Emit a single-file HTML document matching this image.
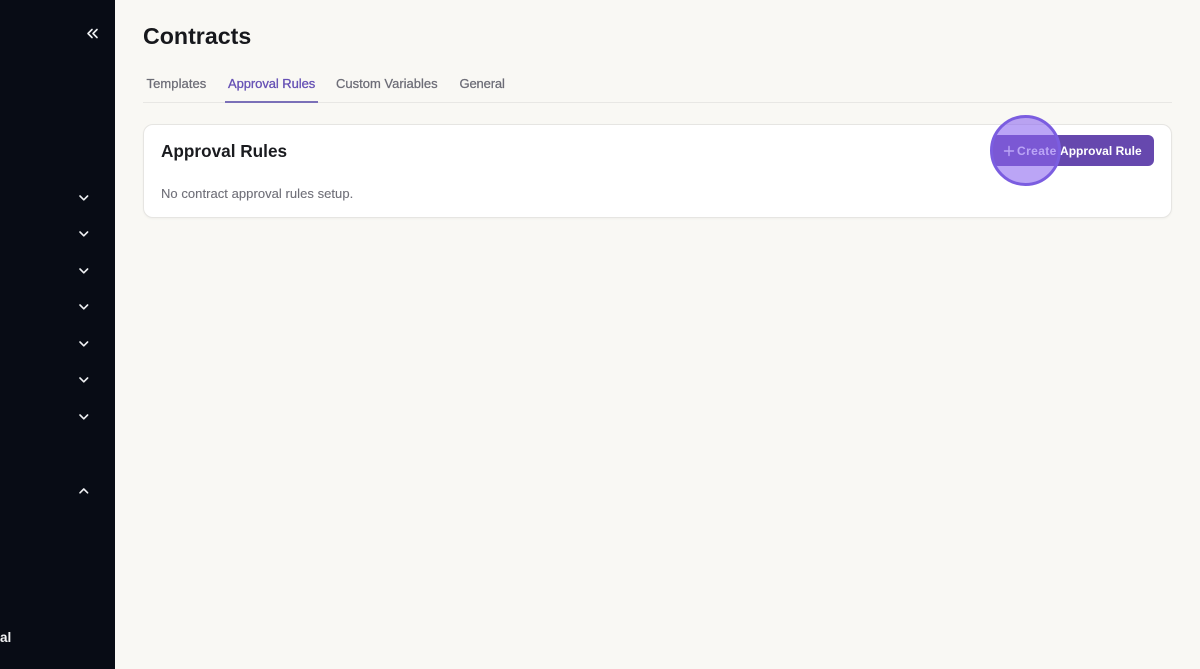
<!DOCTYPE html>
<html lang="en">
<head>
<meta charset="utf-8">
<title>Contracts</title>
<style>
html,body{margin:0;padding:0;width:1200px;height:669px;overflow:hidden;background:#f9f8f4;font-family:"Liberation Sans",sans-serif}
.abs{position:absolute;white-space:nowrap}
#side{position:absolute;left:0;top:0;width:115px;height:669px;background:#080c15}
svg.ic{position:absolute;overflow:visible;fill:none;stroke:#eef0f2;stroke-width:1.6;stroke-linecap:round;stroke-linejoin:round}
.tab{position:absolute;top:76px;font-size:13px;line-height:16px;color:#6c6c76;white-space:nowrap;-webkit-text-stroke:.25px #6c6c76}
</style>
</head>
<body>
<div id="side">
  <svg class="ic" style="left:86px;top:28px" width="14" height="12" viewBox="0 0 14 12"><path d="M6 1.500 2 5.500 6 9.500M11 1.500 7 5.500 11 9.500"/></svg>
  <svg class="ic" style="left:78px;top:194px" width="12" height="8" viewBox="0 0 12 8"><path d="M2 2 5.800 5.800 9.600 2"/></svg>
  <svg class="ic" style="left:78px;top:230px" width="12" height="8" viewBox="0 0 12 8"><path d="M2 2 5.800 5.800 9.600 2"/></svg>
  <svg class="ic" style="left:78px;top:267px" width="12" height="8" viewBox="0 0 12 8"><path d="M2 2 5.800 5.800 9.600 2"/></svg>
  <svg class="ic" style="left:78px;top:303px" width="12" height="8" viewBox="0 0 12 8"><path d="M2 2 5.800 5.800 9.600 2"/></svg>
  <svg class="ic" style="left:78px;top:340px" width="12" height="8" viewBox="0 0 12 8"><path d="M2 2 5.800 5.800 9.600 2"/></svg>
  <svg class="ic" style="left:78px;top:376px" width="12" height="8" viewBox="0 0 12 8"><path d="M2 2 5.800 5.800 9.600 2"/></svg>
  <svg class="ic" style="left:78px;top:413px" width="12" height="8" viewBox="0 0 12 8"><path d="M2 2 5.800 5.800 9.600 2"/></svg>
  <svg class="ic" style="left:78px;top:487px" width="12" height="8" viewBox="0 0 12 8"><path d="M2 5.800 5.800 2 9.600 5.800"/></svg>
  <div class="abs" style="left:0;top:629px;font-size:13.500px;line-height:18px;font-weight:700;color:#f2f3f4">al</div>
</div>

<div class="abs" style="left:143px;top:21px;font-size:23.200px;line-height:30px;font-weight:700;color:#17181c">Contracts</div>

<div class="tab" style="left:146.500px;letter-spacing:.07px">Templates</div>
<div class="tab" style="left:228px;color:#6651b5;-webkit-text-stroke:.3px #6651b5;letter-spacing:-.07px">Approval Rules</div>
<div class="tab" style="left:336px">Custom Variables</div>
<div class="tab" style="left:459.500px;letter-spacing:-.14px">General</div>
<div style="position:absolute;left:143px;top:102px;width:1029px;height:1px;background:#e8e7e4"></div>
<div style="position:absolute;left:225px;top:101px;width:93px;height:2px;background:#7b70b8"></div>

<div style="position:absolute;left:143px;top:124px;width:1027px;height:92px;background:#fff;border:1px solid #e6e5e2;border-radius:10px;box-shadow:0 1px 2px rgba(0,0,0,.04)"></div>
<div class="abs" style="left:161px;top:139.500px;font-size:17.200px;line-height:23px;font-weight:700;color:#1a1b1f">Approval Rules</div>
<div class="abs" style="left:161px;top:185.500px;font-size:13px;line-height:16px;color:#6f6f78;letter-spacing:.045px;-webkit-text-stroke:.1px #6f6f78">No contract approval rules setup.</div>

<div style="position:absolute;left:992px;top:135px;width:162px;height:31px;background:#6648ae;border-radius:6px"></div>
<svg class="ic" style="left:1003px;top:145px;stroke:#fff;stroke-width:1.400" width="12" height="12" viewBox="0 0 12 12"><path d="M6 1.500V10.500M1.500 6H10.500"/></svg>
<div class="abs" style="left:1017px;top:143.500px;font-size:12px;line-height:15px;font-weight:700;color:#fff;letter-spacing:.4px">Create</div>
<div class="abs" style="left:1060px;top:143.500px;font-size:12px;line-height:15px;font-weight:700;color:#fff;letter-spacing:.03px">Approval Rule</div>

<div style="position:absolute;left:990px;top:115px;width:71px;height:71px;box-sizing:border-box;border:3px solid #7b5de0;border-radius:50%;background:rgba(137,100,240,.58)"></div>
</body>
</html>
